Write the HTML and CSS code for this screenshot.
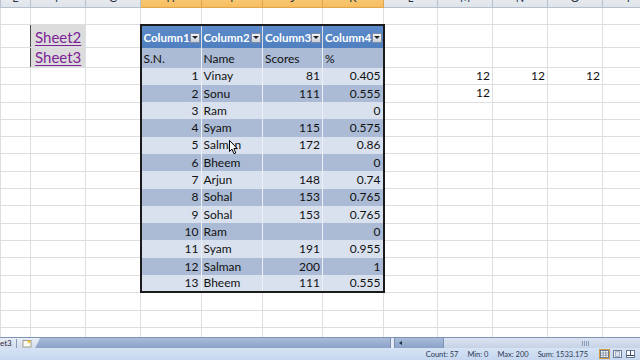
FILE: index.html
```html
<!DOCTYPE html>
<html>
<head>
<meta charset="utf-8">
<link rel="stylesheet" href="styles.css">
</head>
<body>
<div class="app">
  <div class="sheet-wrap">
    <table class="sheet">
      <colgroup>
        <col class="c-e"><col class="c-f"><col class="c-g"><col class="c-h"><col class="c-i"><col class="c-j"><col class="c-k"><col class="c-l"><col class="c-m"><col class="c-n"><col class="c-o"><col class="c-p">
      </colgroup>
      <tr class="hdr h20"><td>E</td><td>F</td><td>G</td><td class="sel">H</td><td class="sel">I</td><td class="sel">J</td><td class="sel">K</td><td>L</td><td>M</td><td>N</td><td>O</td><td>P</td></tr>
      <tr class="h17"><td></td><td></td><td></td><td class="TB"></td><td class="TB"></td><td class="TB"></td><td class="TB"></td><td></td><td></td><td></td><td></td><td></td></tr>
      <tr class="h23"><td class="pre"></td><td class="lnk"><span>Sheet2</span></td><td></td>
        <td class="th L"><div class="thc"><span>Column1</span><span class="dd"><i></i></span></div></td>
        <td class="th"><div class="thc"><span>Column2</span><span class="dd"><i></i></span></div></td>
        <td class="th"><div class="thc"><span>Column3</span><span class="dd"><i></i></span></div></td>
        <td class="th R"><div class="thc"><span>Column4</span><span class="dd"><i></i></span></div></td>
        <td></td><td></td><td></td><td></td><td></td></tr>
      <tr class="h20"><td class="pre"></td><td class="lnk lnk-b"><span>Sheet3</span></td><td></td>
        <td class="tc dk L txt">S.N.</td><td class="tc dk txt">Name</td><td class="tc dk txt">Scores</td><td class="tc dk R txt">%</td>
        <td></td><td></td><td></td><td></td><td></td></tr>
      <tr class="hd"><td></td><td></td><td></td><td class="tc lt L num">1</td><td class="tc lt txt">Vinay</td><td class="tc lt num">81</td><td class="tc lt R num">0.405</td><td></td><td class="num">12</td><td class="num">12</td><td class="num">12</td><td></td></tr>
      <tr class="hd"><td></td><td></td><td></td><td class="tc dk L num">2</td><td class="tc dk txt">Sonu</td><td class="tc dk num">111</td><td class="tc dk R num">0.555</td><td></td><td class="num">12</td><td></td><td></td><td></td></tr>
      <tr class="hd"><td></td><td></td><td></td><td class="tc lt L num">3</td><td class="tc lt txt">Ram</td><td class="tc lt num"></td><td class="tc lt R num">0</td><td></td><td></td><td></td><td></td><td></td></tr>
      <tr class="hd"><td></td><td></td><td></td><td class="tc dk L num">4</td><td class="tc dk txt">Syam</td><td class="tc dk num">115</td><td class="tc dk R num">0.575</td><td></td><td></td><td></td><td></td><td></td></tr>
      <tr class="hd"><td></td><td></td><td></td><td class="tc lt L num">5</td><td class="tc lt txt">Salman</td><td class="tc lt num">172</td><td class="tc lt R num">0.86</td><td></td><td></td><td></td><td></td><td></td></tr>
      <tr class="hd"><td></td><td></td><td></td><td class="tc dk L num">6</td><td class="tc dk txt">Bheem</td><td class="tc dk num"></td><td class="tc dk R num">0</td><td></td><td></td><td></td><td></td><td></td></tr>
      <tr class="hd"><td></td><td></td><td></td><td class="tc lt L num">7</td><td class="tc lt txt">Arjun</td><td class="tc lt num">148</td><td class="tc lt R num">0.74</td><td></td><td></td><td></td><td></td><td></td></tr>
      <tr class="hd"><td></td><td></td><td></td><td class="tc dk L num">8</td><td class="tc dk txt">Sohal</td><td class="tc dk num">153</td><td class="tc dk R num">0.765</td><td></td><td></td><td></td><td></td><td></td></tr>
      <tr class="hd"><td></td><td></td><td></td><td class="tc lt L num">9</td><td class="tc lt txt">Sohal</td><td class="tc lt num">153</td><td class="tc lt R num">0.765</td><td></td><td></td><td></td><td></td><td></td></tr>
      <tr class="hd"><td></td><td></td><td></td><td class="tc dk L num">10</td><td class="tc dk txt">Ram</td><td class="tc dk num"></td><td class="tc dk R num">0</td><td></td><td></td><td></td><td></td><td></td></tr>
      <tr class="hd"><td></td><td></td><td></td><td class="tc lt L num">11</td><td class="tc lt txt">Syam</td><td class="tc lt num">191</td><td class="tc lt R num">0.955</td><td></td><td></td><td></td><td></td><td></td></tr>
      <tr class="hd"><td></td><td></td><td></td><td class="tc dk L num">12</td><td class="tc dk txt">Salman</td><td class="tc dk num">200</td><td class="tc dk R num">1</td><td></td><td></td><td></td><td></td><td></td></tr>
      <tr class="hd"><td></td><td></td><td></td><td class="tc lt L B num">13</td><td class="tc lt B txt">Bheem</td><td class="tc lt B num">111</td><td class="tc lt R B num">0.555</td><td></td><td></td><td></td><td></td><td></td></tr>
      <tr class="h18"><td></td><td></td><td></td><td></td><td></td><td></td><td></td><td></td><td></td><td></td><td></td><td></td></tr>
      <tr class="h17"><td></td><td></td><td></td><td></td><td></td><td></td><td></td><td></td><td></td><td></td><td></td><td></td></tr>
      <tr class="h17"><td></td><td></td><td></td><td></td><td></td><td></td><td></td><td></td><td></td><td></td><td></td><td></td></tr>
    </table>
    <svg class="cursor" width="10" height="15" viewBox="0 0 10 15"><path d="M0.5 0.5 L0.5 11.5 L3 9.2 L5 13.8 L6.8 13 L4.9 8.6 L8.3 8.6 Z" fill="#fff" stroke="#000" stroke-width="1" stroke-linejoin="round"/></svg>
  </div>
  <div class="tabbar">
    <div class="tabs">
      <span class="tab">et3</span>
      <span class="newtab"><svg width="11" height="9" viewBox="0 0 11 9"><rect x="1" y="1.5" width="8" height="6.5" fill="#fbfbf4" stroke="#8c8c7c" stroke-width="0.8"/><path d="M6.5 0.5 l1 1.3 1.5 0.2 -1 1 .3 1.5 -1.3 -.7 -1.3 .7 .3 -1.5 -1 -1 1.5 -.2z" fill="#f0c33c"/></svg></span>
    </div>
    <div class="hbar"></div>
    <div class="split"></div>
    <div class="sbtn"><i></i></div>
    <div class="track"></div>
    <div class="thumb"><span class="grip"></span></div>
  </div>
  <div class="status">
    <span>Count: 57</span>
    <span>Min: 0</span>
    <span>Max: 200</span>
    <span>Sum: 1533.175</span>
    <div class="views">
      <span class="vbtn on"><svg width="9" height="8" viewBox="0 0 9 8"><rect x="0.5" y="0.5" width="8" height="7" fill="#fff" stroke="#6b7c97"/><path d="M0.5 3h8M0.5 5.2h8M3.2 0.5v7M5.8 0.5v7" stroke="#6b7c97" stroke-width="0.7"/></svg></span>
      <span class="vbtn"><svg width="9" height="8" viewBox="0 0 9 8"><rect x="0.5" y="0.5" width="8" height="7" fill="#fff" stroke="#6b7c97"/><rect x="2.2" y="1.8" width="4.6" height="4.4" fill="#dfe6f1" stroke="#6b7c97" stroke-width="0.6"/></svg></span>
      <span class="vbtn"><svg width="9" height="8" viewBox="0 0 9 8"><rect x="0.5" y="0.5" width="8" height="7" fill="#fff" stroke="#6b7c97"/><path d="M4.5 0.5v5M0.5 5.5h8" stroke="#3a4a66" stroke-width="1"/></svg></span>
    </div>
  </div>
</div>
</body>
</html>
```

FILE: styles.css
```css
* { box-sizing: border-box; }
body {
  margin: 0;
  width: 640px;
  height: 360px;
  overflow: hidden;
  background: #fff;
  font-family: Lato, "Noto Sans", sans-serif;
}
.app {
  display: flex;
  flex-direction: column;
  height: 360px;
}
.sheet-wrap {
  height: 337px;
  flex: none;
  overflow: hidden;
  position: relative;
}
.sheet {
  border-collapse: collapse;
  table-layout: fixed;
  width: 642px;
  margin-top: -13px;
  font-size: 12px;
  color: #111;
}
.c-e { width: 30px; }
.c-f { width: 55px; }
.c-g { width: 55px; }
.c-h { width: 60.5px; }
.c-i { width: 61.5px; }
.c-j { width: 60px; }
.c-k { width: 61px; }
.c-l { width: 54px; }
.c-m { width: 55px; }
.c-n { width: 55px; }
.c-o { width: 55px; }
.c-p { width: 55px; }

.sheet td {
  border: 1px solid #dcdee1;
  padding: 0 0 1.5px 0;
  overflow: hidden;
  white-space: nowrap;
  vertical-align: bottom;
  line-height: 14px;
}
.h20 { height: 20px; }
.h17 { height: 17px; }
.h18 { height: 18px; }
.h23 { height: 23px; }
.hd { height: 17.3px; }

.hdr td {
  background: linear-gradient(#eef2f6, #dfe4ea);
  border-color: #b7c1cd;
  text-align: center;
  vertical-align: middle;
  color: #2a3446;
  font-size: 11px;
  padding: 0;
}
.hdr td.sel {
  background: linear-gradient(#fbd58c, #f6bd5d);
  border-color: #e0a54d;
}

.num { text-align: right; padding-right: 2px !important; }
.txt { padding-left: 2px !important; }

.pre { border-right: 1px solid #4a4a4a !important; }
.lnk {
  background: #dcdcdc;
  font-size: 15px;
  line-height: 18px !important;
  padding-left: 4px !important;
  padding-bottom: 1px !important;
  color: #7d2397;
}
.lnk span {
  text-decoration: underline;
  text-decoration-thickness: 1px;
  text-underline-offset: 2px;
}
.lnk-b { border-bottom: 1px solid #dcdee1; }

.TB { border-bottom: 2px solid #1b1b1b !important; }
.th {
  background: linear-gradient(#5c8bca, #4f7fbf);
  color: #fff;
  font-weight: bold;
  font-size: 11.5px;
  border-top: 2px solid #1b1b1b;
  border-bottom: none !important;
  border-left: 1px solid #9db6dc;
  border-right: 1px solid #9db6dc;
  padding: 0 1px 3px 2px !important;
}
.thc {
  display: flex;
  align-items: center;
  justify-content: space-between;
}
.dd {
  width: 10px;
  height: 10px;
  border: 1px solid #7f8ca3;
  background: linear-gradient(#f4f5f7, #c9d0da);
  display: flex;
  align-items: center;
  justify-content: center;
}
.dd i {
  width: 0;
  height: 0;
  border-left: 3px solid transparent;
  border-right: 3px solid transparent;
  border-top: 3px solid #222;
}
.tc {
  border-top: none !important;
  border-bottom: none !important;
  border-left: 1px solid #edf1f7 !important;
  border-right: 1px solid #edf1f7 !important;
}
.dk { background: #abbbd5; }
.lt { background: #d9e1ee; }
.L { border-left: 2px solid #1b1b1b !important; }
.R { border-right: 2px solid #1b1b1b !important; }
.B { border-bottom: 2px solid #1b1b1b !important; }

.cursor {
  position: absolute;
  left: 229px;
  top: 140px;
}

.tabbar {
  height: 11px;
  flex: none;
  display: flex;
  background: linear-gradient(#a9bcd9, #8ba1c7);
  border-top: 1px solid #7e93b8;
}
.tabs {
  width: 40px;
  display: flex;
  align-items: center;
  background: linear-gradient(#e9eef6, #d3ddec);
  clip-path: polygon(0 0, 100% 0, 88% 100%, 0 100%);
  font-size: 8px;
  color: #1e2a40;
  line-height: 9px;
}
.tab {
  padding-right: 4px;
  border-right: 1px solid #8c9bb5;
}
.newtab {
  display: flex;
  padding-left: 5px;
}
.hbar { flex: 1; }
.split {
  width: 5px;
  background: #e4ebf5;
  border-left: 1px solid #7d8fb1;
  border-right: 1px solid #7d8fb1;
}
.sbtn {
  width: 11px;
  display: flex;
  align-items: center;
  justify-content: center;
}
.sbtn i {
  width: 0;
  height: 0;
  border-top: 2.5px solid transparent;
  border-bottom: 2.5px solid transparent;
  border-right: 3px solid #1f2d48;
}
.track { width: 37px; }
.thumb {
  width: 197px;
  background: linear-gradient(#dae3f0, #c6d3e6);
  border-left: 1px solid #7f93b8;
  display: flex;
  align-items: center;
  padding-left: 138px;
}
.grip {
  width: 7px;
  height: 5px;
  background: repeating-linear-gradient(90deg, #8a9bb8 0 1px, transparent 1px 2px);
}

.status {
  height: 12px;
  flex: none;
  background: linear-gradient(#d6e3f5, #c5d6ef);
  display: flex;
  align-items: center;
  justify-content: flex-end;
  font-size: 7.5px;
  color: #2c3a55;
  gap: 9px;
  padding-right: 4px;
}
.views {
  display: flex;
  gap: 2px;
  margin-left: 2px;
}
.vbtn {
  width: 11px;
  height: 10px;
  display: flex;
  align-items: center;
  justify-content: center;
}
.vbtn.on {
  background: #f6cf7e;
  border: 1px solid #d39c3e;
}
```
